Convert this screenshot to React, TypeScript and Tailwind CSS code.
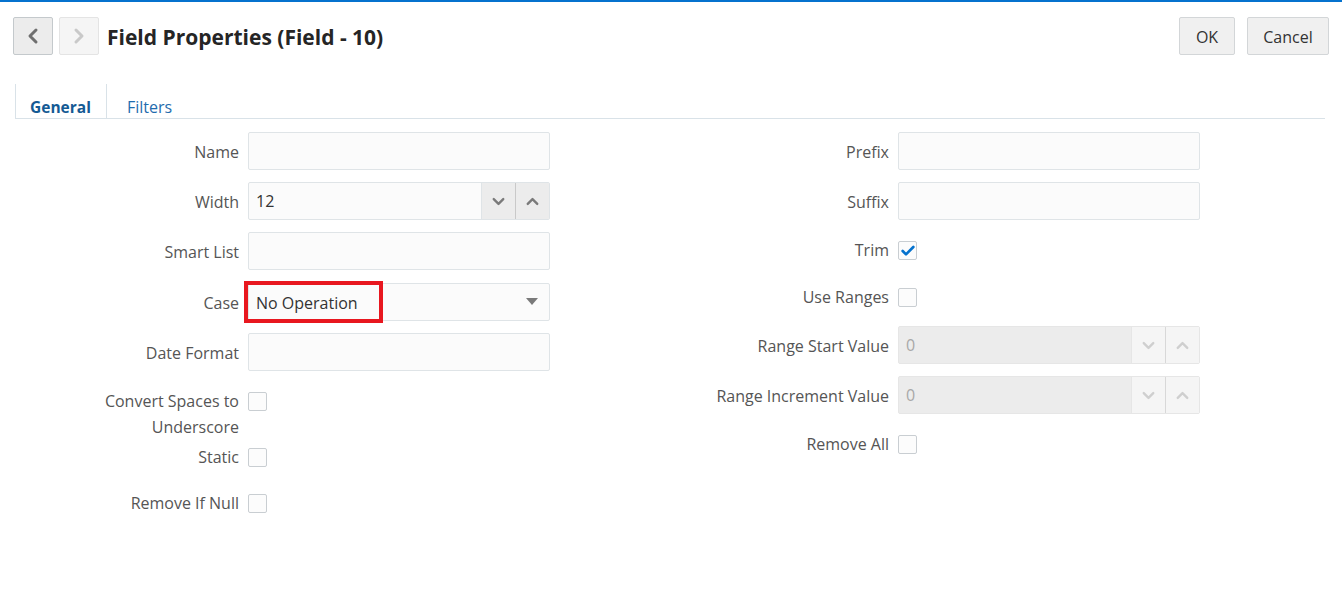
import { ChevronLeft, ChevronRight, ChevronDown, ChevronUp, Check } from "lucide-react"

const font = { fontFamily: '"Segoe UI", "Open Sans", sans-serif' }

function TextInput({ value }: { value?: string }) {
  return (
    <div className="h-[38px] w-[302px] rounded-[2px] border border-[#dfe4e7] bg-[#fbfbfb] px-[7px] flex items-center text-[16px] text-[#333]">
      {value}
    </div>
  )
}

function Spinner({ value, disabled }: { value: string; disabled?: boolean }) {
  return (
    <div
      className={
        disabled
          ? "h-[38px] w-[302px] rounded-[2px] border border-[#e6e6e6] bg-[#ececec] flex items-stretch text-[16px] text-[#a8a8a8]"
          : "h-[38px] w-[302px] rounded-[2px] border border-[#dfe4e7] bg-[#fbfbfb] flex items-stretch text-[16px] text-[#333]"
      }
    >
      <div className="flex-1 flex items-center px-[7px]">{value}</div>
      <div
        className={
          disabled
            ? "w-[34px] flex items-center justify-center bg-[#f5f5f5] border-l border-[#e6e6e6] text-[#cfcfcf]"
            : "w-[34px] flex items-center justify-center bg-[#ececec] border-l border-[#dfe4e7] text-[#7a7a7a]"
        }
      >
        <ChevronDown size={19} strokeWidth={3} />
      </div>
      <div
        className={
          disabled
            ? "w-[34px] flex items-center justify-center bg-[#f5f5f5] border-l border-[#d8d8d8] text-[#cfcfcf]"
            : "w-[34px] flex items-center justify-center bg-[#ececec] border-l border-[#c9c9c9] text-[#7a7a7a]"
        }
      >
        <ChevronUp size={19} strokeWidth={3} />
      </div>
    </div>
  )
}

function Checkbox({ checked }: { checked?: boolean }) {
  return (
    <div className="mt-[9px] h-[19px] w-[19px] rounded-[2px] border border-[#c9ced2] bg-[#fcfcfc] flex items-center justify-center text-[#0572ce]">
      {checked && <Check size={16} strokeWidth={4} />}
    </div>
  )
}

function FieldRow({ label, children }: { label: string; children: React.ReactNode }) {
  return (
    <div className="flex items-center gap-[9px] mb-3">
      <div className="w-[239px] pt-[2px] text-right text-[16px] text-[#555]">{label}</div>
      {children}
    </div>
  )
}

function CheckRow({
  label,
  checked,
  className,
  tight,
}: {
  label: React.ReactNode
  checked?: boolean
  className?: string
  tight?: boolean
}) {
  return (
    <div className={"flex items-start gap-[9px] " + (className ?? "mb-3")}>
      <div
        className={
          tight
            ? "w-[239px] pt-[5px] text-right text-[16px] leading-[26px] text-[#555]"
            : "w-[239px] pt-[5px] pb-[4px] text-right text-[16px] leading-[26px] text-[#555]"
        }
      >
        {label}
      </div>
      <Checkbox checked={checked} />
    </div>
  )
}

export default function App() {
  return (
    <div className="w-[1342px] h-[596px] bg-white overflow-hidden border-t-2 border-[#0572ce]" style={font}>
      {/* Header */}
      <div className="flex items-center justify-between pl-[13px] pr-[13px] pt-[15px]">
        <div className="flex items-center">
          <button className="h-[38px] w-[40px] rounded-[2px] border border-[#c4c9cc] bg-[#ececec] flex items-center justify-center text-[#6f6f6f]">
            <ChevronLeft size={24} strokeWidth={3} />
          </button>
          <button className="ml-[6px] h-[38px] w-[40px] rounded-[2px] border border-[#e4e4e4] bg-[#f5f5f5] flex items-center justify-center text-[#c9c9c9]">
            <ChevronRight size={24} strokeWidth={3} />
          </button>
          <h1 className="ml-[8px] pt-[3px] text-[21px] font-bold text-[#252525]">Field Properties (Field - 10)</h1>
        </div>
        <div className="flex items-center gap-[12px]">
          <button className="h-[38px] w-[56px] pt-[2px] rounded-[2px] border border-[#d3d6d8] bg-[#f0f0f0] text-[16px] text-[#333]">OK</button>
          <button className="h-[38px] w-[82px] pt-[2px] rounded-[2px] border border-[#d3d6d8] bg-[#f0f0f0] text-[16px] text-[#333]">Cancel</button>
        </div>
      </div>

      {/* Tabs */}
      <div className="mt-[29px] ml-[15px] mr-[17px] flex h-[35px] border-b border-[#d9e2e8]">
        <div className="h-full w-[91px] border-l border-[#d9e2e8] pl-[14px] flex items-end leading-[22px] text-[15.5px] font-bold text-[#145a94]">
          General
        </div>
        <div className="h-full border-l border-[#d9e2e8] pl-5 flex items-end leading-[22px] text-[16px] text-[#1f6cae]">
          Filters
        </div>
      </div>

      {/* Form */}
      <div className="mt-[13px] grid grid-cols-[650px_650px]">
        <div className="flex flex-col">
          <FieldRow label="Name">
            <TextInput />
          </FieldRow>
          <FieldRow label="Width">
            <Spinner value="12" />
          </FieldRow>
          <FieldRow label="Smart List">
            <TextInput />
          </FieldRow>
          <FieldRow label="Case">
            <div className="relative mt-[1px] h-[38px] w-[302px] rounded-[2px] border border-[#dfe4e7] bg-[#fbfbfb] px-[7px] flex items-center justify-between text-[16px] text-[#333]">
              <span className="pt-[2px]">No Operation</span>
              <svg width="12" height="8" viewBox="0 0 12 8" className="mr-[4px]">
                <path d="M0 0 L12 0 L6 7 Z" fill="#7a7a7a" />
              </svg>
              <div className="absolute left-[-5px] top-[-3px] w-[139px] h-[42px] border-4 border-[#e8171f]" />
            </div>
          </FieldRow>
          <FieldRow label="Date Format">
            <TextInput />
          </FieldRow>
          <CheckRow
            tight
            className="mb-[-1px]"
            label={
              <>
                Convert Spaces to
                <br />
                Underscore
              </>
            }
          />
          <CheckRow label="Static" className="mb-[11px]" />
          <CheckRow label="Remove If Null" />
        </div>

        <div className="flex flex-col">
          <FieldRow label="Prefix">
            <TextInput />
          </FieldRow>
          <FieldRow label="Suffix">
            <TextInput />
          </FieldRow>
          <CheckRow label="Trim" checked />
          <CheckRow label="Use Ranges" />
          <FieldRow label="Range Start Value">
            <Spinner value="0" disabled />
          </FieldRow>
          <FieldRow label="Range Increment Value">
            <Spinner value="0" disabled />
          </FieldRow>
          <CheckRow label="Remove All" />
        </div>
      </div>
    </div>
  )
}
